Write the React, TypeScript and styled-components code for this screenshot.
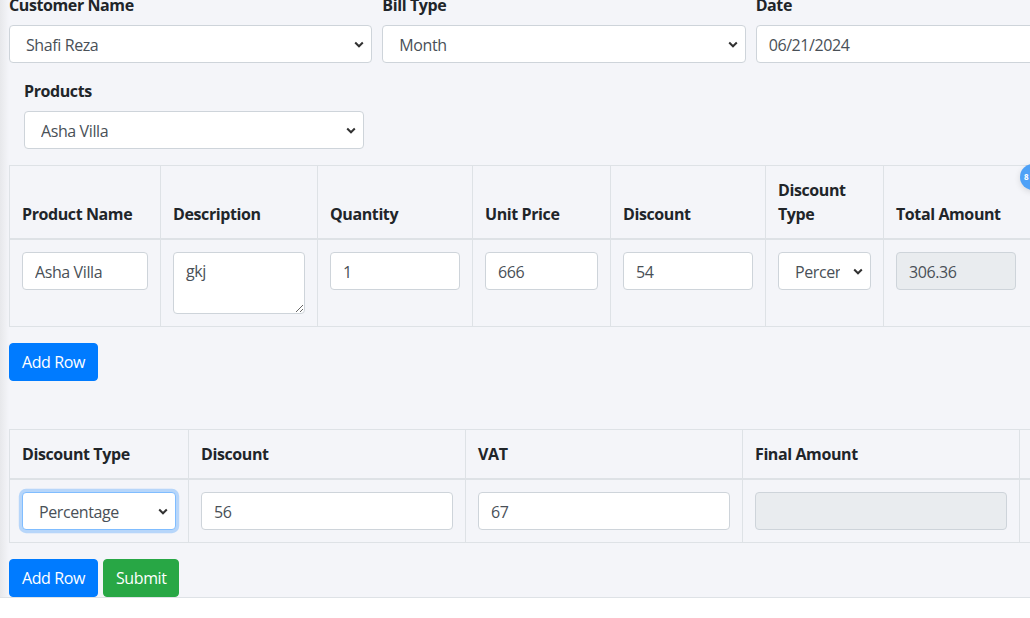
import React from "react";
import styled, { createGlobalStyle } from "styled-components";

const GlobalStyle = createGlobalStyle`
  html, body { margin: 0; padding: 0; background: #ffffff; }
  body { font-family: "Open Sans", "Noto Sans", Arial, sans-serif; color: #212529; font-size: 16px; line-height: 1.5; letter-spacing: -0.4px; }
  * { box-sizing: border-box; }
`;

const chevron =
  "url(\"data:image/svg+xml,%3Csvg xmlns='http://www.w3.org/2000/svg' width='10' height='7' viewBox='0 0 10 7'%3E%3Cpath d='M1.2 1.5l3.8 3.8 3.8-3.8' fill='none' stroke='%23333' stroke-width='2'/%3E%3C/svg%3E\")";

const Viewport = styled.div`
  position: relative;
  width: 1030px;
  height: 618px;
  overflow: hidden;
  background: #ffffff;
`;

const Main = styled.main`
  position: relative;
  margin-top: -7px;
  padding: 0 0 0 9px;
  width: 1200px;
  background: linear-gradient(to right, #e7e8eb 0px, #f4f5f9 9px, #f4f5f9 100%);
  border-bottom: 1px solid #dee2e6;
`;

const Content = styled.div`
  width: 1110px;
`;

const FieldRow = styled.div`
  display: grid;
  grid-template-columns: repeat(3, 1fr);
  column-gap: 10px;
  margin-bottom: 16px;
`;

const Group = styled.div<{ $indent?: number; $width?: number }>`
  display: flex;
  flex-direction: column;
  padding-left: ${(p) => p.$indent ?? 0}px;
  width: ${(p) => (p.$width ? `${p.$width}px` : "auto")};
  margin-bottom: ${(p) => (p.$indent ? "16px" : "0")};
`;

const Label = styled.label`
  font-weight: 700;
  font-size: 16px;
  line-height: 24px;
  margin-bottom: 8px;
  color: #212529;
`;

const fieldBase = `
  display: block;
  width: 100%;
  height: 38px;
  padding: 7px 12px 5px;
  font-family: "Open Sans", "Noto Sans", Arial, sans-serif;
  font-size: 16px;
  line-height: 24px;
  letter-spacing: -0.4px;
  color: #495057;
  background-color: #ffffff;
  border: 1px solid #ced4da;
  border-radius: 4px;
  outline: none;
`;

const Select = styled.select<{ $focus?: boolean }>`
  ${fieldBase}
  appearance: none;
  -webkit-appearance: none;
  padding-left: 16px;
  padding-right: 30px;
  background-image: ${chevron};
  background-repeat: no-repeat;
  background-position: right 7px center;
  background-size: 10px 7px;
  ${(p) =>
    p.$focus
      ? `border-color: #80bdff; box-shadow: 0 0 0 3.2px rgba(0, 123, 255, 0.25);`
      : ""}
`;

const Input = styled.input<{ $fixed?: number }>`
  ${fieldBase}
  ${(p) => (p.$fixed ? `width: ${p.$fixed}px;` : "")}
  &:disabled, &[readonly] {
    background-color: #e9ecef;
  }
`;

const TextArea = styled.textarea`
  ${fieldBase}
  padding-top: 6px;
  height: 62px;
  resize: vertical;
`;

const Table = styled.table<{ $width: number }>`
  border-collapse: collapse;
  table-layout: fixed;
  width: ${(p) => p.$width}px;
  margin-bottom: 16px;
  color: #212529;
`;

const Th = styled.th`
  text-align: left;
  vertical-align: bottom;
  font-weight: 700;
  font-size: 16px;
  line-height: 24px;
  padding: 12px 12px;
  border: 1px solid #dee2e6;
  border-bottom: 2px solid #dee2e6;
`;

const Td = styled.td`
  vertical-align: top;
  padding: 12px 12px;
  border: 1px solid #dee2e6;
`;

const ButtonRow = styled.div<{ $after?: number }>`
  display: flex;
  gap: 5px;
  margin-bottom: ${(p) => p.$after ?? 0}px;
`;

const Button = styled.button<{ $variant: "primary" | "success" }>`
  height: 38px;
  padding: 6px 12px;
  font-family: "Open Sans", "Noto Sans", Arial, sans-serif;
  font-size: 16px;
  line-height: 24px;
  letter-spacing: -0.4px;
  color: #ffffff;
  border: 1px solid ${(p) => (p.$variant === "primary" ? "#007bff" : "#28a745")};
  background: ${(p) => (p.$variant === "primary" ? "#007bff" : "#28a745")};
  border-radius: 4px;
  cursor: pointer;
`;

const Badge = styled.div`
  position: absolute;
  left: 1020px;
  top: 171px;
  width: 26px;
  height: 26px;
  border-radius: 50%;
  background: #4ea1f7;
  box-shadow: 0 2px 6px rgba(0, 0, 0, 0.12);
  color: #ffffff;
  font-family: "Open Sans", Arial, sans-serif;
  font-size: 8px;
  font-weight: 700;
  line-height: 26px;
  padding-left: 4px;
`;

const itemCols = [151, 157, 155, 138, 155, 118, 240];
const summaryCols = [179, 277, 277, 277, 160];

export default function App() {
  const noop = () => {};
  return (
    <>
      <GlobalStyle />
      <Viewport>
        <Main>
          <Content>
            <FieldRow>
              <Group>
                <Label>Customer Name</Label>
                <Select value="Shafi Reza" onChange={noop}>
                  <option>Shafi Reza</option>
                </Select>
              </Group>
              <Group>
                <Label>Bill Type</Label>
                <Select value="Month" onChange={noop}>
                  <option>Month</option>
                </Select>
              </Group>
              <Group>
                <Label>Date</Label>
                <Input value="06/21/2024" onChange={noop} />
              </Group>
            </FieldRow>

            <Group $indent={15} $width={355}>
              <Label>Products</Label>
              <Select value="Asha Villa" onChange={noop}>
                <option>Asha Villa</option>
              </Select>
            </Group>

            <Table $width={itemCols.reduce((a, b) => a + b, 0)}>
              <colgroup>
                {itemCols.map((w, i) => (
                  <col key={i} style={{ width: w }} />
                ))}
              </colgroup>
              <thead>
                <tr>
                  <Th>Product Name</Th>
                  <Th>Description</Th>
                  <Th>Quantity</Th>
                  <Th>Unit Price</Th>
                  <Th>Discount</Th>
                  <Th>Discount Type</Th>
                  <Th>Total Amount</Th>
                </tr>
              </thead>
              <tbody>
                <tr>
                  <Td>
                    <Input value="Asha Villa" onChange={noop} />
                  </Td>
                  <Td>
                    <TextArea rows={2} value="gkj" onChange={noop} spellCheck={false} />
                  </Td>
                  <Td>
                    <Input value="1" onChange={noop} />
                  </Td>
                  <Td>
                    <Input value="666" onChange={noop} />
                  </Td>
                  <Td>
                    <Input value="54" onChange={noop} />
                  </Td>
                  <Td>
                    <Select value="Percentage" onChange={noop}>
                      <option>Percentage</option>
                    </Select>
                  </Td>
                  <Td>
                    <Input $fixed={120} value="306.36" disabled />
                  </Td>
                </tr>
              </tbody>
            </Table>

            <ButtonRow $after={48}>
              <Button $variant="primary">Add Row</Button>
            </ButtonRow>

            <Table $width={summaryCols.reduce((a, b) => a + b, 0)}>
              <colgroup>
                {summaryCols.map((w, i) => (
                  <col key={i} style={{ width: w }} />
                ))}
              </colgroup>
              <thead>
                <tr>
                  <Th>Discount Type</Th>
                  <Th>Discount</Th>
                  <Th>VAT</Th>
                  <Th>Final Amount</Th>
                  <Th></Th>
                </tr>
              </thead>
              <tbody>
                <tr>
                  <Td>
                    <Select $focus value="Percentage" onChange={noop}>
                      <option>Percentage</option>
                    </Select>
                  </Td>
                  <Td>
                    <Input value="56" onChange={noop} />
                  </Td>
                  <Td>
                    <Input value="67" onChange={noop} />
                  </Td>
                  <Td>
                    <Input value="" disabled />
                  </Td>
                  <Td></Td>
                </tr>
              </tbody>
            </Table>

            <ButtonRow>
              <Button $variant="primary">Add Row</Button>
              <Button $variant="success">Submit</Button>
            </ButtonRow>
          </Content>
          <Badge>8</Badge>
        </Main>
      </Viewport>
    </>
  );
}
